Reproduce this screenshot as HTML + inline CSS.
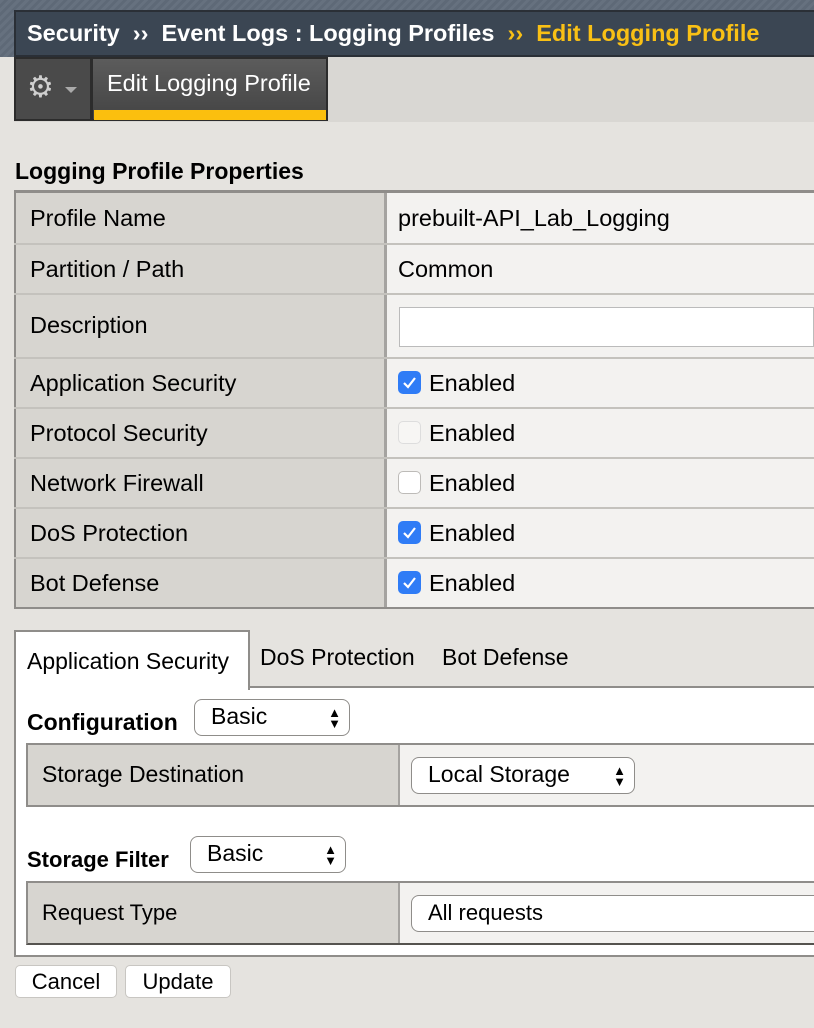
<!DOCTYPE html>
<html><head><style>
*{margin:0;padding:0;box-sizing:border-box}
body{width:814px;height:1028px;background:#e5e3df;font-family:"Liberation Sans",Arial,sans-serif;position:relative;overflow:hidden;color:#000}
.a{position:absolute}
.hdr{left:14px;top:10px;width:800px;height:47px;background:#3b4653;border:2px solid #2a2f36;border-right:none;color:#fff;font-weight:bold;font-size:23.5px;line-height:43px;padding-left:11px;white-space:nowrap}
.y{color:#f9c015}
.row{position:absolute;left:14px;width:800px;border-top:2px solid #c4c2bd;font-size:23.5px}
.row .l{position:absolute;left:2px;top:0;width:371px;height:100%;background:#d7d5d0;border-right:3px solid #a5a3a0;padding-left:14px}
.row .v{position:absolute;left:373px;top:0;right:0;height:100%;background:#f3f2f0;padding-left:11px}
.cb{display:inline-block;width:23px;height:23px;border-radius:5px;vertical-align:middle;margin-right:8px;position:relative;top:-2px}
.cb svg{display:block}
.on{background:#2f7cf6}
.off{background:#fff;border:1px solid #bdbbb8}
.sel{position:absolute;background:#fff;border:1px solid #8f8d8a;border-radius:8px;font-size:23px;padding-left:16px}
.arr{position:absolute;right:8px;top:50%;transform:translateY(-50%);font-size:13px;line-height:11px;text-align:center}
.btn{position:absolute;top:965px;height:33px;background:#fff;border:1px solid #c8c6c2;border-radius:5px;font-size:22px;line-height:31px;text-align:center}
</style></head><body>
<div class="a" style="left:0;top:0;width:814px;height:57px;background:repeating-linear-gradient(135deg,#66717f 0 3px,#5e6977 3px 6px)"></div>
<div class="a hdr">Security &nbsp;›› &nbsp;Event Logs : Logging Profiles <span class="y">&nbsp;›› &nbsp;Edit Logging Profile</span></div>
<div class="a" style="left:14px;top:57px;width:800px;height:65px;background:#d9d7d3"></div>
<div class="a" style="left:14px;top:57px;width:78px;height:64px;background:#4a4a4a;border:2px solid #2c2c2c"></div>
<div class="a" style="left:27px;top:73px;color:#cfcfcf;font-size:30px;line-height:30px">⚙</div>
<div class="a" style="left:65px;top:87px;width:0;height:0;border-left:6px solid transparent;border-right:6px solid transparent;border-top:6px solid #aaa"></div>
<div class="a" style="left:91px;top:57px;width:237px;height:64px;background:linear-gradient(#5c5c5c,#444);border:2px solid #2c2c2c;color:#fff;font-size:23.5px;padding:11px 0 0 14px">Edit Logging Profile</div>
<div class="a" style="left:94px;top:110px;width:232px;height:10px;background:#fbbf0e"></div>
<div class="a" style="left:15px;top:158px;font-weight:bold;font-size:23px">Logging Profile Properties</div>
<div class="a" style="left:14px;top:190px;width:800px;height:419px;border-top:3px solid #8f8d8a;border-left:2px solid #8f8d8a;border-bottom:3px solid #8f8d8a"></div>
<div class="row" style="top:193px;height:50px;border-top:none;line-height:50px"><div class="l">Profile Name</div><div class="v">prebuilt-API_Lab_Logging</div></div>
<div class="row" style="top:243px;height:50px;line-height:48px"><div class="l">Partition / Path</div><div class="v">Common</div></div>
<div class="row" style="top:293px;height:64px;line-height:60px"><div class="l">Description</div><div class="v"><div class="a" style="left:12px;top:12px;right:0;height:40px;background:#fff;border:1px solid #bbb"></div></div></div>
<div class="row" style="top:357px;height:50px;line-height:48px"><div class="l">Application Security</div><div class="v"><span class="cb on"><svg width="23" height="23"><path d="M6 12l4 4 7-9" stroke="#fff" stroke-width="2.2" fill="none"/></svg></span>Enabled</div></div>
<div class="row" style="top:407px;height:50px;line-height:48px"><div class="l">Protocol Security</div><div class="v"><span class="cb off" style="background:#f7f6f4;border-color:#ddd"></span>Enabled</div></div>
<div class="row" style="top:457px;height:50px;line-height:48px"><div class="l">Network Firewall</div><div class="v"><span class="cb off"></span>Enabled</div></div>
<div class="row" style="top:507px;height:50px;line-height:48px"><div class="l">DoS Protection</div><div class="v"><span class="cb on"><svg width="23" height="23"><path d="M6 12l4 4 7-9" stroke="#fff" stroke-width="2.2" fill="none"/></svg></span>Enabled</div></div>
<div class="row" style="top:557px;height:50px;line-height:48px"><div class="l">Bot Defense</div><div class="v"><span class="cb on"><svg width="23" height="23"><path d="M6 12l4 4 7-9" stroke="#fff" stroke-width="2.2" fill="none"/></svg></span>Enabled</div></div>

<div class="a" style="left:14px;top:686px;width:800px;height:271px;background:#fff;border:2px solid #8f8d8a;border-right:none"></div>
<div class="a" style="left:14px;top:630px;width:236px;height:60px;background:#fff;border:2px solid #8f8d8a;border-bottom:none;font-size:23px;padding:16px 0 0 11px;white-space:nowrap">Application Security</div>
<div class="a" style="left:260px;top:644px;font-size:23px">DoS Protection</div>
<div class="a" style="left:442px;top:644px;font-size:23px">Bot Defense</div>
<div class="a" style="left:27px;top:709px;font-weight:bold;font-size:23px">Configuration</div>
<div class="sel" style="left:194px;top:699px;width:156px;height:37px;line-height:33px">Basic<div class="arr">▲<br>▼</div></div>
<div class="a" style="left:26px;top:743px;width:788px;height:64px;border-top:2px solid #8f8d8a;border-bottom:2px solid #8f8d8a;border-left:2px solid #8f8d8a;background:#f3f2f0">
<div class="a" style="left:0;top:0;width:372px;height:100%;background:#d7d5d0;border-right:2px solid #a5a3a0;font-size:23px;padding:16px 0 0 14px">Storage Destination</div>
<div class="sel" style="left:383px;top:12px;width:224px;height:37px;line-height:33px">Local Storage<div class="arr">▲<br>▼</div></div></div>
<div class="a" style="left:27px;top:847px;font-weight:bold;font-size:22px">Storage Filter</div>
<div class="sel" style="left:190px;top:836px;width:156px;height:37px;line-height:33px">Basic<div class="arr">▲<br>▼</div></div>
<div class="a" style="left:26px;top:881px;width:788px;height:64px;border-top:2px solid #8f8d8a;border-bottom:2px solid #55534f;border-left:2px solid #8f8d8a;background:#f3f2f0">
<div class="a" style="left:0;top:0;width:372px;height:100%;background:#d7d5d0;border-right:2px solid #a5a3a0;font-size:22px;padding:17px 0 0 14px">Request Type</div>
<div class="sel" style="left:383px;top:12px;width:420px;height:37px;line-height:33px;font-size:22px">All requests</div></div>
<div class="btn" style="left:15px;width:102px">Cancel</div>
<div class="btn" style="left:125px;width:106px">Update</div>
</body></html>
